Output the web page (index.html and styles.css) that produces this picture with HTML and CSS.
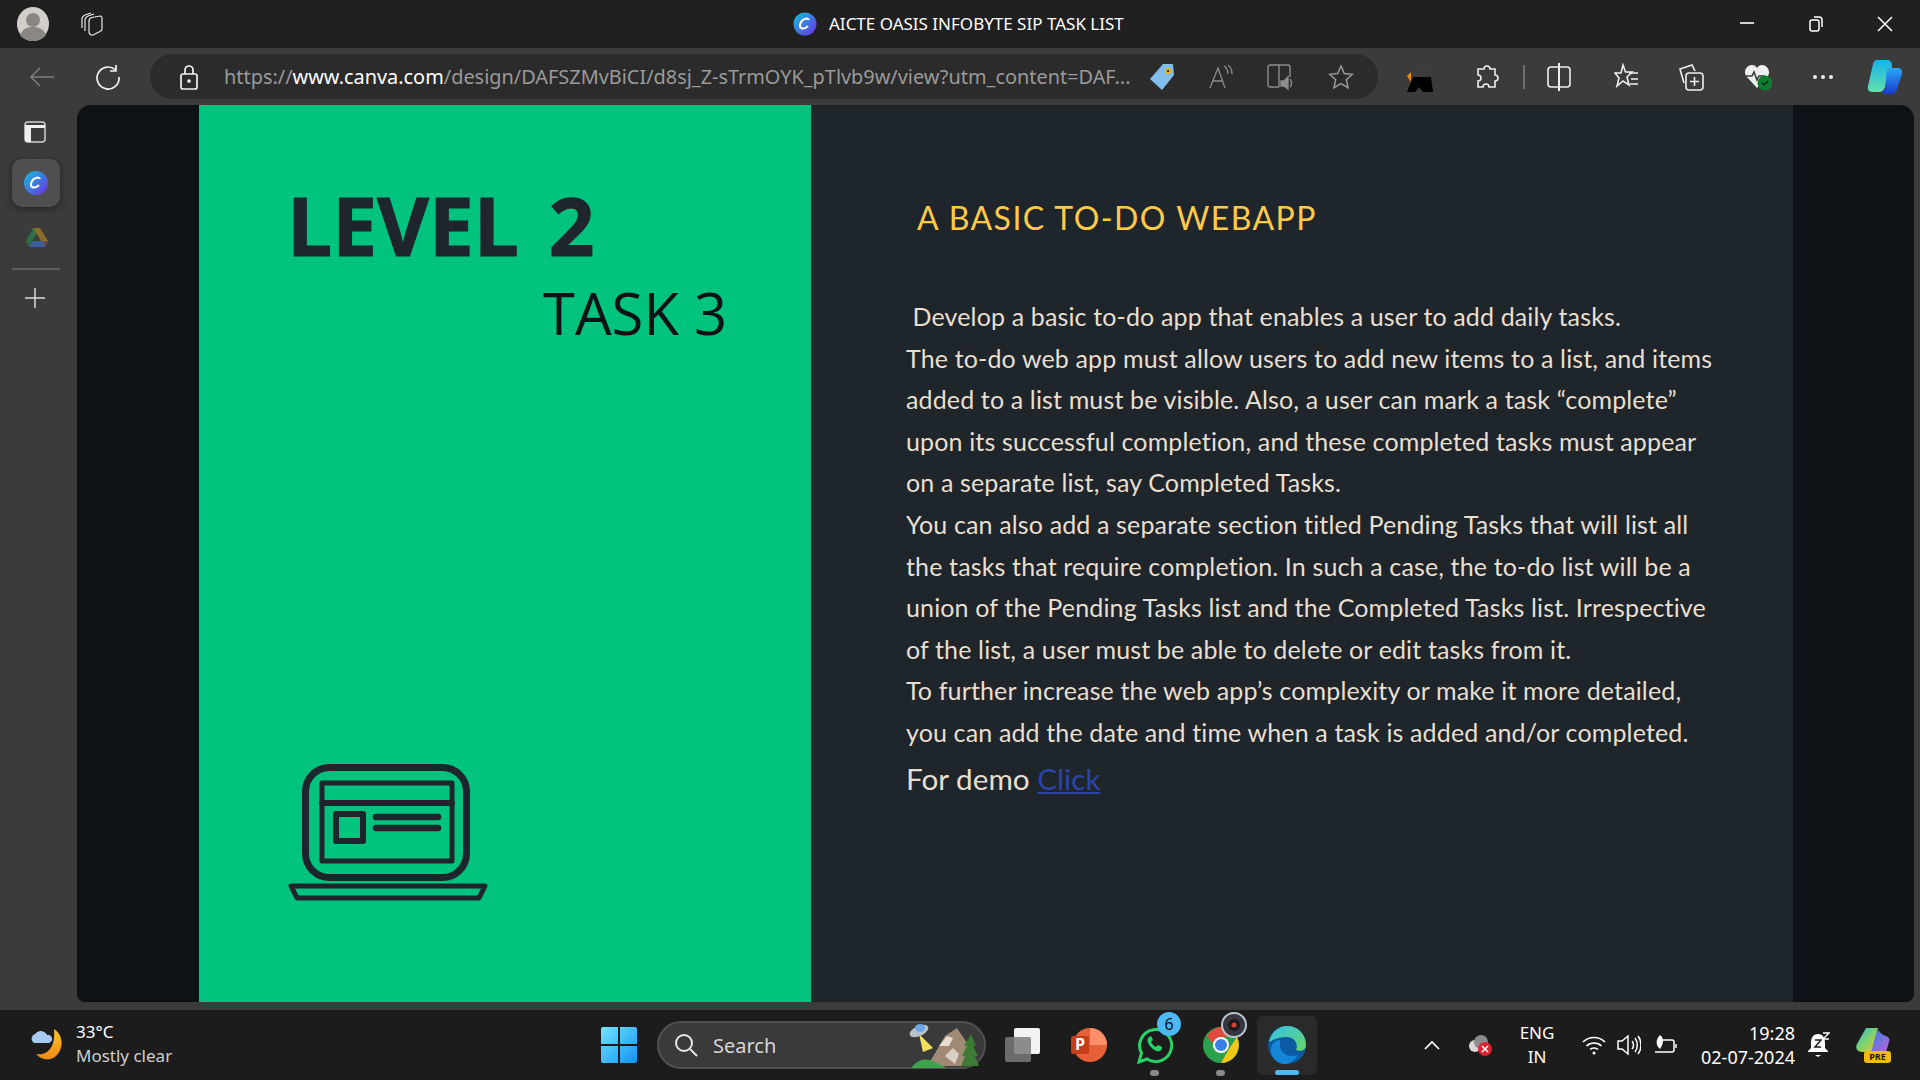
FILE: index.html
```html
<!DOCTYPE html>
<html lang="en">

<head>
    <meta charset="UTF-8">
    <title>AICTE OASIS INFOBYTE SIP TASK LIST</title>
    <link rel="stylesheet" href="styles.css">
</head>

<body>
    <!-- title bar -->
    <div class="titlebar">
        <div class="title-left">
            <svg class="avatar" width="32" height="34" viewBox="0 0 32 34"><ellipse cx="16" cy="17" rx="16" ry="17" fill="#d2cfc9"/><circle cx="16" cy="13" r="7" fill="#8b8884"/><path d="M3 28c3-7 8-8 13-8s10 1 13 8c-3 4-8 6-13 6s-10-2-13-6z" fill="#8b8884"/></svg>
            <svg width="26" height="26" viewBox="0 0 26 26" fill="none" stroke="#e8e8e8" stroke-width="1.200"><path d="M4 17V8c0-2 1-3 3-4l6-2"/><path d="M7 20V9c0-2 1-3 3-4l6-2"/><path d="M11 10c0-2 1-3 3-3.500L22 5c1 0 2 1 2 2v11c0 1-1 2-2 2.500L15 24c-2 .5-4-1-4-3z" fill="#202020"/></svg>
        </div>
        <div class="title-center">
            <svg width="24" height="24" viewBox="0 0 24 24"><defs><linearGradient id="canvaA" x1="0" y1="0" x2="1" y2="1"><stop offset="0" stop-color="#10c5d5"/><stop offset="1" stop-color="#6f2ce8"/></linearGradient></defs><circle cx="12" cy="12" r="11.500" fill="url(#canvaA)"/><path d="M16 8c-1-3-8-1-9 5-.5 4 4 5 8 1" fill="none" stroke="#fff" stroke-width="2"/></svg>
            <span>AICTE OASIS INFOBYTE SIP TASK LIST</span>
        </div>
        <div class="window-btns">
            <svg width="16" height="16" viewBox="0 0 16 16" stroke="#fff" stroke-width="1.600"><path d="M1 7h14"/></svg>
            <svg width="16" height="18" viewBox="0 0 16 18" fill="none" stroke="#fff" stroke-width="1.500"><rect x="2" y="5" width="9" height="11" rx="2"/><path d="M6 2h5a3 3 0 0 1 3 3v7"/></svg>
            <svg width="16" height="16" viewBox="0 0 16 16" stroke="#fff" stroke-width="1.500"><path d="M1 1l14 14M15 1L1 15"/></svg>
        </div>
    </div>

    <!-- toolbar -->
    <div class="toolbar">
        <div class="nav-btns">
            <svg width="26" height="24" viewBox="0 0 26 24" fill="none" stroke="#7d7d7d" stroke-width="1.500"><path d="M25 12H2M11 3l-9 9 9 9"/></svg>
            <svg width="26" height="26" viewBox="0 0 26 26" fill="none" stroke="#f2f2f2" stroke-width="1.700"><path d="M20 5.500A11 11 0 1 0 24 13"/><path d="M21 1v6h-6"/></svg>
        </div>
        <div class="address">
            <svg class="lock" width="20" height="26" viewBox="0 0 20 26" fill="none" stroke="#f2f2f2" stroke-width="1.700"><rect x="2" y="10" width="16" height="15" rx="2"/><path d="M6 10V6a4 4 0 0 1 8 0v4"/><circle cx="10" cy="17" r="1" fill="#f2f2f2"/></svg>
            <div class="url">https://<b>www.canva.com</b>/design/DAFSZMvBiCI/d8sj_Z-sTrmOYK_pTlvb9w/view?utm_content=DAF...</div>
            <div class="address-icons">
                <svg width="26" height="28" viewBox="0 0 26 28"><path d="M14 1h10l1 11-12 15L1 16z" fill="#83bdeb"/><circle cx="19" cy="8" r="3" fill="#f2b705"/><circle cx="19" cy="8" r="1.200" fill="#333"/></svg>
                <svg width="26" height="26" viewBox="0 0 26 26" fill="none" stroke="#8d8d8d" stroke-width="1.300"><path d="M2 24L10 4l7 20M5 17h10"/><path d="M16 2c3 2 4 5 4 8M20 1c3 2 4 6 4 9"/></svg>
                <svg width="28" height="26" viewBox="0 0 28 26" fill="none" stroke="#8d8d8d" stroke-width="1.400"><path d="M12 23H3a2 2 0 0 1-2-2V3a2 2 0 0 1 2-2h18a2 2 0 0 1 2 2v10M12 1v22"/><path d="M14 17h3l4-4v12l-4-3h-3z" fill="#8d8d8d"/><path d="M23 15c2 2 2 6 0 8"/></svg>
                <svg width="26" height="26" viewBox="0 0 26 26" fill="none" stroke="#9a9a9a" stroke-width="1.500"><path d="M13 2l3.300 7.500 8 .8-6 5.400 1.800 8L13 19.500 5.900 23.700l1.800-8-6-5.400 8-.8z"/></svg>
            </div>
        </div>
        <div class="toolbar-icons">
            <svg class="ext-black" width="26" height="36" viewBox="0 0 26 36"><path d="M8 4h12l4 14H5z" fill="#3c3c3c"/><path d="M6 18h18l2 15H16l-4-5-4 5H0z" fill="#000"/><path d="M0 17l4-4v10z" fill="#f08a12"/></svg>
            <svg class="ic-puzzle" width="24" height="26" viewBox="0 0 24 26" fill="none" stroke="#efefef" stroke-width="1.600"><path d="M9 5a3 3 0 1 1 6 0h5v6a3 3 0 1 1 0 6v6h-6a3 3 0 1 0-6 0H3v-6a3 3 0 1 0 0-6V5z"/></svg>
            <div class="tool-divider"></div>
            <svg class="ic-split" width="24" height="28" viewBox="0 0 24 28" fill="none" stroke="#efefef" stroke-width="1.600"><rect x="1" y="4" width="22" height="20" rx="3"/><path d="M12 0v28" stroke-width="2"/></svg>
            <svg class="ic-fav" width="26" height="28" viewBox="0 0 26 28" fill="none" stroke="#efefef" stroke-width="1.600"><path d="M9 2l2.500 7H18l-5 5 2 8-6-4-6 5 2-8-4-5h6z"/><path d="M15 10h9M17 16h7M16 21h8"/></svg>
            <svg class="ic-coll" width="26" height="28" viewBox="0 0 26 28" fill="none" stroke="#efefef" stroke-width="1.600"><path d="M6 20L2 6l12-4 3 6"/><rect x="8" y="10" width="17" height="17" rx="3" fill="#3b3b3b"/><path d="M16.500 14v9M12 18.500h9"/></svg>
            <svg class="ic-heart" width="28" height="28" viewBox="0 0 28 28"><path d="M13 25L2 13C-1 8 3 2 8 2c2 0 4 1 5 3 1-2 3-3 5-3 5 0 9 6 6 11z" fill="#efefef"/><path d="M1 13h7l2-4 3 8 2-4h6" fill="none" stroke="#3b3b3b" stroke-width="1.600"/><circle cx="21" cy="20" r="7.500" fill="#0f7b2e"/><path d="M18 20l2 2 4-4" fill="none" stroke="#111" stroke-width="1.200"/></svg>
            <div class="dots"><i></i><i></i><i></i></div>
            <svg class="ic-copilot" width="36" height="34" viewBox="0 0 36 34"><defs><linearGradient id="copA" x1="0" y1="0" x2="0" y2="1"><stop offset="0" stop-color="#17b3ee"/><stop offset="1" stop-color="#62e0a8"/></linearGradient><linearGradient id="copB" x1="0" y1="0" x2="0" y2="1"><stop offset="0" stop-color="#2aa8f5"/><stop offset="1" stop-color="#1a3bd0"/></linearGradient></defs><path d="M10 0h10c3 0 5 2 5 5l-1 6-6 16c-1 3-3 5-6 5H5c-3 0-5-3-4-6L6 4c.5-2 2-4 4-4z" fill="url(#copA)"/><path d="M20 8h11c3 0 5 3 4 6l-5 15c-1 3-3 5-6 5H12c3 0 5-2 6-5z" fill="url(#copB)"/></svg>
        </div>
    </div>

    <div class="main">
        <!-- edge sidebar -->
        <div class="sidebar">
            <svg class="side-tabs" width="22" height="22" viewBox="0 0 22 22"><rect x="1" y="1" width="20" height="20" rx="3" fill="none" stroke="#cfcfcf" stroke-width="1.500"/><path d="M1 4h20v3H7v14H3a2 2 0 0 1-2-2z" fill="#efefef"/></svg>
            <div class="side-active">
                <svg width="24" height="24" viewBox="0 0 24 24"><defs><linearGradient id="canvaB" x1="0" y1="0" x2="1" y2="1"><stop offset="0" stop-color="#10c5d5"/><stop offset="1" stop-color="#6f2ce8"/></linearGradient></defs><circle cx="12" cy="12" r="12" fill="url(#canvaB)"/><path d="M16 8c-1-3-8-1-9 5-.5 4 4 5 8 1" fill="none" stroke="#fff" stroke-width="2"/></svg>
            </div>
            <svg class="side-drive" width="22" height="20" viewBox="0 0 22 20"><path d="M7 0L0 13l3 6 8-14z" fill="#2f6f47"/><path d="M7 0h7l8 13h-7z" fill="#8a6f28"/><path d="M3 19l4-6h15l-3 6z" fill="#3b5f9c"/><path d="M19 19l3-6h-4z" fill="#8c3d32"/></svg>
            <div class="side-divider"></div>
            <svg class="side-plus" width="22" height="22" viewBox="0 0 22 22" stroke="#dcdcdc" stroke-width="1.500"><path d="M11 1v20M1 11h20"/></svg>
        </div>

        <!-- canva slide -->
        <div class="viewer">
            <div class="slide">
                <div class="slide-left">
                    <div class="level">LEVEL 2</div>
                    <div class="task">TASK 3</div>
                    <svg class="laptop" width="200" height="145" viewBox="0 0 200 145" fill="none" stroke="#1e252c" stroke-linejoin="round" stroke-linecap="round">
                        <rect x="17.500" y="8.500" width="161" height="110" rx="24" stroke-width="7"/>
                        <rect x="34" y="24" width="130" height="78" stroke-width="5"/>
                        <path d="M34 44h130" stroke-width="6"/>
                        <rect x="48" y="55" width="27" height="27" stroke-width="6"/>
                        <path d="M88 58h62M88 69h62" stroke-width="6.500"/>
                        <path d="M3 127h194l-6 12H9z" stroke-width="5"/>
                    </svg>
                </div>
                <div class="slide-right">
                    <h2>A BASIC TO-DO WEBAPP</h2>
                    <p class="desc">&nbsp;Develop a basic to-do app that enables a user to add daily tasks.<br>
                        The to-do web app must allow users to add new items to a list, and items<br>
                        added to a list must be visible. Also, a user can mark a task “complete”<br>
                        upon its successful completion, and these completed tasks must appear<br>
                        on a separate list, say Completed Tasks.<br>
                        You can also add a separate section titled Pending Tasks that will list all<br>
                        the tasks that require completion. In such a case, the to-do list will be a<br>
                        union of the Pending Tasks list and the Completed Tasks list. Irrespective<br>
                        of the list, a user must be able to delete or edit tasks from it.<br>
                        To further increase the web app’s complexity or make it more detailed,<br>
                        you can add the date and time when a task is added and/or completed.</p>
                    <p class="demo">For demo <a href="#">Click</a></p>
                </div>
            </div>
        </div>
    </div>

    <!-- windows taskbar -->
    <div class="taskbar">
        <div class="weather">
            <svg width="36" height="36" viewBox="0 0 36 36"><defs><linearGradient id="moon" x1="0" y1="0" x2="0" y2="1"><stop offset="0" stop-color="#f9c52c"/><stop offset="1" stop-color="#f08a16"/></linearGradient></defs><path d="M26 3c10 6 10 21 1 28-6 4-14 3-19-3 9 2 20-4 18-25z" fill="url(#moon)"/><path d="M6 17a5 5 0 0 1 1-9 7 7 0 0 1 12 1 4 4 0 0 1 2 8z" fill="#a9c9f2"/></svg>
            <div>
                <div class="temp">33°C</div>
                <div class="cond">Mostly clear</div>
            </div>
        </div>

        <div class="task-center">
            <svg class="win" width="36" height="36" viewBox="0 0 36 36"><defs><linearGradient id="win" x1="0" y1="0" x2="1" y2="1"><stop offset="0" stop-color="#74e3fb"/><stop offset="1" stop-color="#0f94f5"/></linearGradient></defs><path d="M2 0h15v17H0V2a2 2 0 0 1 2-2zM19 0h15a2 2 0 0 1 2 2v15H19zM0 19h17v17H2a2 2 0 0 1-2-2zM19 19h17v15a2 2 0 0 1-2 2H19z" fill="url(#win)"/></svg>
            <div class="search">
                <svg width="24" height="24" viewBox="0 0 24 24" fill="none" stroke="#e6e6e6" stroke-width="2"><circle cx="10" cy="10" r="8"/><path d="M16 16l7 7"/></svg>
                <span>Search</span>
                <svg class="scene" width="70" height="46" viewBox="0 0 70 46"><path d="M10 12l14 14-10 4z" fill="#f3e15e"/><ellipse cx="10" cy="9" rx="10" ry="5" fill="#b9c2cc" transform="rotate(-25 10 9)"/><ellipse cx="11" cy="6" rx="5" ry="4" fill="#6aa7e8"/><path d="M8 44l14-6 14-24 12-8 8 12 6 8 4 18z" fill="#a08a76"/><path d="M30 24l8-10 6 2-4 8z" fill="#e8ddd2"/><path d="M36 34l8-8 6 6-4 10z" fill="#d9cfc4"/><path d="M2 46c8-10 16-10 24-6l12 6z" fill="#3fa34d"/><path d="M62 12l5 12h-3l5 10h-3l4 10H52l4-10h-3l5-10h-3z" fill="#3d7a35"/></svg>
            </div>
            <svg class="app-view" width="35" height="34" viewBox="0 0 35 34"><rect x="9" y="0" width="26" height="26" rx="2" fill="#f2f2f2"/><rect x="0" y="9" width="26" height="25" rx="2" fill="#7a7a7a" fill-opacity=".85"/></svg>
            <svg class="app" width="36" height="34" viewBox="0 0 36 34"><circle cx="19" cy="17" r="17" fill="#e8603a"/><path d="M19 0a17 17 0 0 1 17 17H19z" fill="#ff8f6b"/><rect x="0" y="8" width="18" height="18" rx="2" fill="#c43e1c"/><text x="4" y="22" class="ppt-p">P</text></svg>
            <div class="app-wrap">
                <svg class="app" width="36" height="38" viewBox="0 0 36 38" fill="none"><path d="M2 36l2.500-9A16 16 0 1 1 10 33z" stroke="#25d366" stroke-width="3"/><path d="M12 11c-2 2-2 5 1 9s7 6 10 5c2-1 2-3 2-4l-4-2-2 2c-2-1-4-3-5-5l2-2-2-4z" fill="#25d366"/></svg>
                <div class="badge">6</div>
                <div class="run-dot"></div>
            </div>
            <div class="app-wrap">
                <svg class="app" width="36" height="38" viewBox="0 0 36 38"><circle cx="18" cy="19" r="18" fill="#2ca14d"/><path d="M18 1a18 18 0 0 1 16 10H18l-9 6-5-7A18 18 0 0 1 18 1z" fill="#e14a3c"/><path d="M34 11a18 18 0 0 1-16 26l8-14z" fill="#f5c518"/><circle cx="18" cy="19" r="8" fill="#fff"/><circle cx="18" cy="19" r="6" fill="#3a7ee8"/></svg>
                <svg class="rec" width="26" height="26" viewBox="0 0 26 26"><circle cx="13" cy="13" r="12" fill="#36363c" stroke="#b9c4d0" stroke-width="2"/><circle cx="13" cy="13" r="6" fill="#1a1a22"/><circle cx="13" cy="13" r="2.500" fill="#d9402e"/></svg>
                <div class="run-dot"></div>
            </div>
            <div class="app-active">
                <svg width="38" height="38" viewBox="0 0 38 38"><defs><linearGradient id="edgeA" x1="0" y1="0" x2="1" y2="1"><stop offset="0" stop-color="#35c1f1"/><stop offset="1" stop-color="#66d860"/></linearGradient></defs><circle cx="19" cy="19" r="19" fill="#0c59a4"/><path d="M1 16C3 6 11 0 19 0c11 0 19 8 19 19 0 5-5 7-10 5 3-6-2-13-9-13S6 13 1 16z" fill="url(#edgeA)"/><path d="M12 19c0 8 8 13 18 10-3 5-8 9-13 9C8 38 2 30 3 22c1-4 4-8 9-8z" fill="#1287d8"/></svg>
                <div class="active-bar"></div>
            </div>
        </div>

        <div class="tray">
            <svg class="tray-chev" width="16" height="10" viewBox="0 0 16 10" fill="none" stroke="#fff" stroke-width="1.700"><path d="M1 9l7-7 7 7"/></svg>
            <svg class="tray-cloud" width="24" height="22" viewBox="0 0 24 22"><circle cx="7" cy="12" r="6" fill="#d8d8d8"/><circle cx="13" cy="8" r="7" fill="#8d8d8d"/><circle cx="17" cy="15" r="7" fill="#d9252f"/><path d="M14 12l6 6M20 12l-6 6" stroke="#fff" stroke-width="1.500"/></svg>
            <div class="lang">ENG<br>IN</div>
            <svg class="tray-wifi" width="24" height="20" viewBox="0 0 24 20" fill="none" stroke="#fff" stroke-width="1.700"><path d="M1 7c6-6 16-6 22 0M4.500 11c4-4 11-4 15 0M8 14.500c2-2 6-2 8 0"/><circle cx="12" cy="18" r="1.500" fill="#fff" stroke="none"/></svg>
            <svg class="tray-vol" width="24" height="22" viewBox="0 0 24 22" fill="none" stroke="#fff" stroke-width="1.500"><path d="M1 7h4l6-5v18l-6-5H1z"/><path d="M15 7c2 2 2 6 0 8M18 4c3 4 3 10 0 14M21 2c4 5 4 13 0 18"/></svg>
            <svg class="tray-batt" width="24" height="22" viewBox="0 0 24 22" fill="none" stroke="#fff" stroke-width="1.500"><path d="M10 6h9a2 2 0 0 1 2 2v8a2 2 0 0 1-2 2H2"/><path d="M23 10v4"/><path d="M7 1c4 3 4 8 0 14-4-3-5-9 0-14z" fill="#fff" stroke="none"/></svg>
            <div class="clock">19:28<br>02-07-2024</div>
            <svg class="tray-bell" width="22" height="26" viewBox="0 0 22 26"><path d="M10 2c5 0 7 4 7 9v5l3 3v1H0v-1l3-3v-5c0-5 2-9 7-9z" fill="#fff"/><path d="M7 23h6l-3 2z" fill="#fff"/><path d="M7 8h6l-6 7h6" fill="none" stroke="#1c1c1c" stroke-width="1.500"/><path d="M15 1h6l-6 6h6" fill="none" stroke="#fff" stroke-width="1.300"/></svg>
            <div class="pre-wrap">
                <svg width="34" height="28" viewBox="0 0 34 28"><defs><linearGradient id="copC" x1="0" y1="0" x2="1" y2="1"><stop offset="0" stop-color="#2bb7e8"/><stop offset=".5" stop-color="#7ed36b"/><stop offset="1" stop-color="#f4c020"/></linearGradient><linearGradient id="copD" x1="0" y1="0" x2="1" y2="1"><stop offset="0" stop-color="#2f7fe8"/><stop offset="1" stop-color="#c864d8"/></linearGradient></defs><path d="M10 0h12l-6 24H6C1 24-1 20 1 16z" fill="url(#copC)"/><path d="M22 2c3 3 4 5 8 6 3 1 4 3 3 6l-3 10c-1 3-3 4-6 4H14l6-22z" fill="url(#copD)"/></svg>
                <div class="pre">PRE</div>
            </div>
        </div>
    </div>
</body>

</html>
```

FILE: styles.css
```css
* {
    box-sizing: border-box;
}

body {
    margin: 0;
    width: 1920px;
    height: 1080px;
    overflow: hidden;
    display: flex;
    flex-direction: column;
    font-family: 'Noto Sans', 'Open Sans', sans-serif;
    background-color: #3b3b3b;
    color: #fff;
}

svg {
    display: block;
    flex-shrink: 0;
}

/* title bar */
.titlebar {
    height: 48px;
    display: flex;
    align-items: center;
    background-color: #202020;
    position: relative;
}

.title-left {
    display: flex;
    align-items: center;
    gap: 29px;
    padding-left: 17px;
}

.title-center {
    position: absolute;
    left: 793px;
    top: 12px;
    display: flex;
    align-items: center;
    gap: 12px;
    font-size: 17px;
    line-height: 24px;
    white-space: nowrap;
}

.window-btns {
    margin-left: auto;
    display: flex;
    align-items: center;
    gap: 53px;
    padding-right: 27px;
}

/* toolbar */
.toolbar {
    height: 57px;
    display: flex;
    align-items: flex-start;
    background-color: #3b3b3b;
}

.nav-btns {
    width: 150px;
    height: 45px;
    margin-top: 6px;
    display: flex;
    align-items: center;
    gap: 40px;
    padding-left: 29px;
}

.address {
    width: 1228px;
    height: 45px;
    margin-top: 6px;
    display: flex;
    align-items: center;
    background-color: #2b2b2b;
    border-radius: 23px;
    padding-left: 29px;
}

.lock {
    margin-right: 25px;
}

.url {
    font-size: 19.9px;
    color: #9a9a9a;
    white-space: nowrap;
    width: 910px;
    overflow: hidden;
}

.url b {
    font-weight: 400;
    color: #fff;
}

.address-icons {
    display: flex;
    align-items: center;
    gap: 33px;
    margin-left: 15px;
}

.toolbar-icons {
    flex: 1;
    height: 45px;
    margin-top: 6px;
    display: flex;
    align-items: center;
    padding-left: 29px;
}

.ic-puzzle {
    margin-left: 42px;
}

.tool-divider {
    width: 2px;
    height: 24px;
    margin-left: 24px;
    background-color: #6e6e6e;
}

.ic-split {
    margin-left: 22px;
}

.ic-fav {
    margin-left: 43px;
}

.ic-coll {
    margin-left: 38px;
}

.ic-heart {
    margin-left: 40px;
}

.dots {
    display: flex;
    gap: 4px;
    margin-left: 41px;
}

.dots i {
    width: 4px;
    height: 4px;
    border-radius: 50%;
    background-color: #efefef;
}

.ic-copilot {
    margin-left: 34px;
}

/* main area */
.main {
    height: 905px;
    display: flex;
}

.sidebar {
    width: 77px;
    display: flex;
    flex-direction: column;
    align-items: center;
}

.side-tabs {
    margin-top: 16px;
    margin-right: 8px;
}

.side-active {
    width: 48px;
    height: 48px;
    margin-top: 16px;
    margin-right: 5px;
    display: flex;
    align-items: center;
    justify-content: center;
    background-color: #4f4f4f;
    border-radius: 10px;
    box-shadow: 0 2px 6px rgba(0, 0, 0, 0.4);
}

.side-drive {
    margin-top: 21px;
    margin-right: 3px;
}

.side-divider {
    width: 48px;
    height: 2px;
    margin-top: 20px;
    margin-right: 5px;
    background-color: #5d5d5d;
}

.side-plus {
    margin-top: 17px;
    margin-right: 7px;
}

.viewer {
    width: 1837px;
    height: 897px;
    background-color: #0d1216;
    border-radius: 14px 14px 8px 8px;
    padding: 0 121px 0 122px;
    overflow: hidden;
}

.slide {
    height: 100%;
    display: flex;
}

.slide-left {
    width: 612px;
    height: 100%;
    display: flex;
    flex-direction: column;
    padding: 78px 0 0 88px;
    background-color: #00c37d;
    color: #1e252c;
}

.level {
    font-family: 'Open Sans', sans-serif;
    font-size: 80px;
    font-weight: 700;
    line-height: 84px;
    white-space: pre;
    word-spacing: 9px;
    -webkit-text-stroke: 1px #1e252c;
}

.task {
    font-family: 'Open Sans', sans-serif;
    font-size: 58px;
    line-height: 80px;
    margin: 6px 0 0 256px;
    color: #0d1216;
}

.laptop {
    margin-top: auto;
    margin-bottom: 98px;
    margin-left: 1px;
}

.slide-right {
    flex: 1;
    padding: 0 0 0 95px;
    background-color: #1e262b;
}

.slide-right h2 {
    margin: 90px 0 0 11px;
    font-family: 'Lato', 'Noto Sans', sans-serif;
    font-size: 32px;
    font-weight: 400;
    line-height: 46px;
    letter-spacing: 1.45px;
    color: #ffc94a;
    white-space: nowrap;
}

.desc {
    margin: 55px 0 0;
    font-family: 'Lato', 'Noto Sans', sans-serif;
    font-size: 25px;
    line-height: 41.6px;
    letter-spacing: 0.14px;
    color: #e9dfd0;
    white-space: nowrap;
}

.demo {
    margin: 3px 0 0;
    font-family: 'Lato', 'Noto Sans', sans-serif;
    font-size: 29.7px;
    line-height: 44px;
    color: #e9dfd0;
}

.demo a {
    color: #2b44a8;
}

/* taskbar */
.taskbar {
    height: 70px;
    display: flex;
    align-items: center;
    background-color: #1c1c1c;
    position: relative;
}

.weather {
    width: 601px;
    display: flex;
    align-items: center;
    gap: 12px;
    padding-left: 28px;
    margin-top: -2px;
}

.temp {
    font-size: 17px;
    line-height: 24px;
}

.cond {
    font-size: 17px;
    line-height: 24px;
    color: #cfcfcf;
}

.task-center {
    display: flex;
    align-items: center;
}

.search {
    width: 329px;
    height: 48px;
    margin-left: 20px;
    display: flex;
    align-items: center;
    gap: 15px;
    padding-left: 15px;
    background-color: #3a3a3a;
    border: 2px solid #505050;
    border-radius: 24px;
    font-size: 20px;
    color: #d6d6d6;
}

.scene {
    margin-left: auto;
    margin-right: 5px;
}

.app-view {
    margin-left: 19px;
}

.app-view + .app {
    margin-left: 31px;
}

.ppt-p {
    font-family: 'Open Sans', sans-serif;
    font-size: 16px;
    font-weight: 700;
    fill: #fff;
}

.app-wrap {
    position: relative;
    width: 36px;
    margin-left: 30px;
}

.badge {
    position: absolute;
    left: 20px;
    top: -14px;
    width: 24px;
    height: 24px;
    border-radius: 50%;
    background-color: #4cb9f5;
    color: #111;
    font-size: 16px;
    line-height: 24px;
    text-align: center;
}

.rec {
    position: absolute;
    left: 18px;
    top: -14px;
}

.run-dot {
    position: absolute;
    left: 13px;
    top: 44px;
    width: 9px;
    height: 6px;
    border-radius: 3px;
    background-color: #8a8a8a;
}

.app-active {
    position: relative;
    width: 60px;
    height: 59px;
    margin-left: 18px;
    display: flex;
    justify-content: center;
    padding-top: 10px;
    background-color: #2a2a2a;
    border-radius: 6px;
}

.active-bar {
    position: absolute;
    left: 18px;
    bottom: 0;
    width: 24px;
    height: 5px;
    border-radius: 3px;
    background-color: #4cb9f5;
}

.tray {
    margin-left: auto;
    display: flex;
    align-items: center;
    padding-right: 30px;
}

.tray-cloud {
    margin-left: 28px;
}

.lang {
    width: 50px;
    margin-left: 20px;
    font-size: 17px;
    line-height: 24px;
    text-align: center;
}

.tray-wifi {
    margin-left: 20px;
}

.tray-vol {
    margin-left: 11px;
}

.tray-batt {
    margin-left: 12px;
}

.clock {
    margin-left: 24px;
    font-size: 18px;
    line-height: 24px;
    text-align: right;
    white-space: nowrap;
}

.tray-bell {
    margin-left: 13px;
}

.pre-wrap {
    position: relative;
    margin-left: 26px;
    width: 34px;
    height: 34px;
}

.pre {
    position: absolute;
    left: 8px;
    top: 23px;
    width: 27px;
    height: 12px;
    border-radius: 3px;
    background-color: #f2b90f;
    color: #1c1c1c;
    font-size: 9px;
    font-weight: 700;
    line-height: 12px;
    text-align: center;
}
```
